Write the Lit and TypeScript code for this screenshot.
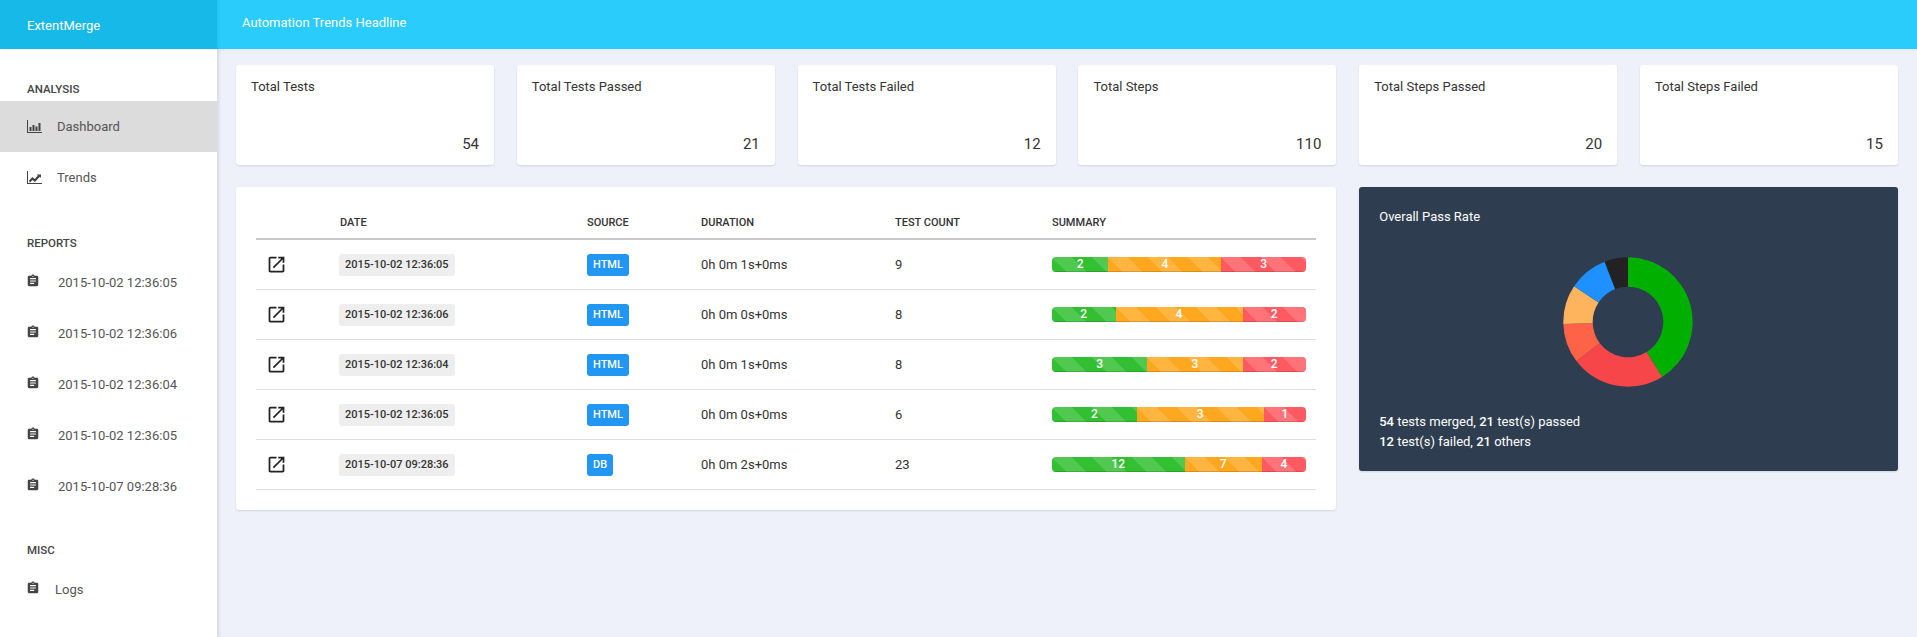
import { html, svg, css, LitElement } from 'lit';
import { customElement } from 'lit/decorators.js';

const ASSIGNMENT = 'M19 3h-4.18C14.4 1.84 13.3 1 12 1c-1.3 0-2.4.84-2.82 2H5c-1.1 0-2 .9-2 2v14c0 1.1.9 2 2 2h14c1.1 0 2-.9 2-2V5c0-1.1-.9-2-2-2zm-7 0c.55 0 1 .45 1 1s-.45 1-1 1-1-.45-1-1 .45-1 1-1zm2 14H7v-2h7v2zm3-4H7v-2h10v2zm0-4H7V7h10v2z';
const OPEN_NEW = 'M19 19H5V5h7V3H5c-1.11 0-2 .9-2 2v14c0 1.1.89 2 2 2h14c1.1 0 2-.9 2-2v-7h-2v7zM14 3v2h3.59l-9.83 9.83 1.41 1.41L19 6.41V10h2V3h-7z';

const stats = [
  ['Total Tests', 54],
  ['Total Tests Passed', 21],
  ['Total Tests Failed', 12],
  ['Total Steps', 110],
  ['Total Steps Passed', 20],
  ['Total Steps Failed', 15],
];

const reports = ['2015-10-02 12:36:05', '2015-10-02 12:36:06', '2015-10-02 12:36:04', '2015-10-02 12:36:05', '2015-10-07 09:28:36'];

const rows = [
  { date: '2015-10-02 12:36:05', source: 'HTML', duration: '0h 0m 1s+0ms', count: 9, parts: [2, 4, 3] },
  { date: '2015-10-02 12:36:06', source: 'HTML', duration: '0h 0m 0s+0ms', count: 8, parts: [2, 4, 2] },
  { date: '2015-10-02 12:36:04', source: 'HTML', duration: '0h 0m 1s+0ms', count: 8, parts: [3, 3, 2] },
  { date: '2015-10-02 12:36:05', source: 'HTML', duration: '0h 0m 0s+0ms', count: 6, parts: [2, 3, 1] },
  { date: '2015-10-07 09:28:36', source: 'DB', duration: '0h 0m 2s+0ms', count: 23, parts: [12, 7, 4] },
];

const slices: [number, string][] = [
  [21, '#00af00'],
  [12, '#f7464a'],
  [5, '#ff6347'],
  [5, '#fdb45c'],
  [5, '#1e90ff'],
  [3, '#222222'],
];

@customElement('app-root')
export class AppRoot extends LitElement {
  static styles = css`
    :host {
      display: block;
      min-height: 100vh;
      font-family: Roboto, 'Noto Sans', sans-serif;
      font-size: 13px;
      color: #333;
      background: #eef1f9;
    }
    .layout {
      display: grid;
      grid-template-columns: 217px 1fr;
      grid-template-rows: 49px 1fr;
      min-height: 100vh;
    }
    .brand {
      background: #17b9e8;
      color: #fff;
      font-size: 13px;
      line-height: 47px;
      padding: 2px 0 0 27px;
      box-shadow: 1px 0 3px rgba(0, 0, 0, 0.08);
      z-index: 2;
    }
    .topbar {
      background: #29ccfb;
      color: #fff;
      font-size: 13px;
      line-height: 45px;
      padding-left: 25px;
      box-shadow: 0 1px 2px rgba(0, 0, 0, 0.06);
      z-index: 1;
    }
    .sidebar {
      background: #fff;
      padding-top: 28px;
      box-shadow: 2px 0 3px rgba(0, 0, 0, 0.1);
      z-index: 1;
      color: #555;
    }
    .label {
      height: 24px;
      line-height: 24px;
      padding-left: 27px;
      font-size: 11.5px;
      font-weight: 500;
      color: #444;
    }
    .nav-item {
      display: flex;
      align-items: center;
      height: 51px;
      padding-left: 27px;
    }
    .nav-item.active {
      background: #dcdcdc;
    }
    .nav-item svg {
      flex: none;
      display: block;
    }
    .main-nav svg {
      width: 15px;
      height: 13px;
      margin-right: 15px;
    }
    .report-nav {
      margin-top: 2px;
      margin-bottom: 26px;
    }
    .report-nav .nav-item,
    .misc-nav .nav-item {
      padding-left: 26px;
    }
    .report-nav svg,
    .misc-nav svg {
      width: 14px;
      height: 14px;
      fill: #444;
      margin-top: -3px;
      margin-right: 18px;
    }
    .misc-nav {
      margin-top: 2px;
    }
    .misc-nav svg {
      margin-right: 15px;
    }
    .main-nav {
      margin-bottom: 28px;
    }
    .content {
      display: grid;
      grid-template-columns: repeat(6, 1fr);
      column-gap: 22.8px;
      row-gap: 22px;
      align-items: start;
      align-content: start;
      padding: 16px 19px;
    }
    .card {
      background: #fff;
      border-radius: 3px;
      box-shadow: 0 1px 2px rgba(0, 0, 0, 0.12);
    }
    .stat {
      display: flex;
      flex-direction: column;
      height: 100px;
      box-sizing: border-box;
      padding: 12px 15px 11px;
      line-height: 20px;
    }
    .stat .value {
      margin-top: auto;
      text-align: right;
      font-size: 15px;
    }
    .tests {
      grid-column: span 4;
      padding: 20px;
    }
    table {
      width: 100%;
      border-collapse: collapse;
      table-layout: fixed;
    }
    th {
      height: 31px;
      padding: 0;
      text-align: left;
      font-size: 11px;
      font-weight: 500;
      color: #333;
      border-bottom: 2px solid #c8c8c8;
    }
    th:nth-child(2) {
      padding-left: 1px;
    }
    td {
      height: 49px;
      padding: 0;
      border-bottom: 1px solid #ddd;
    }
    .open {
      display: block;
      width: 21px;
      height: 21px;
      margin-left: 9.5px;
      fill: #222;
    }
    .date {
      display: inline-block;
      height: 22px;
      line-height: 22px;
      padding: 0 6px;
      border-radius: 3px;
      background: #eee;
      font-size: 11px;
      font-weight: 500;
      color: #333;
    }
    .source {
      display: inline-block;
      height: 22px;
      line-height: 22px;
      padding: 0 6px;
      border-radius: 3px;
      background: #2196f3;
      color: #fff;
      font-size: 11px;
      font-weight: 500;
    }
    .bar {
      display: flex;
      width: 254px;
      height: 15px;
      border-radius: 4px;
      overflow: hidden;
    }
    .seg {
      text-align: center;
      color: #fff;
      font-size: 12px;
      font-weight: 500;
      line-height: 15px;
      box-shadow: inset 0 -1px 0 rgba(0, 0, 0, 0.15);
      background-size: 40px 40px;
      background-image: linear-gradient(
        45deg,
        rgba(255, 255, 255, 0.15) 25%,
        transparent 25%,
        transparent 50%,
        rgba(255, 255, 255, 0.15) 50%,
        rgba(255, 255, 255, 0.15) 75%,
        transparent 75%,
        transparent
      );
    }
    .seg.pass {
      background-color: #32bf32;
    }
    .seg.warn {
      background-color: #ffa81f;
    }
    .seg.fail {
      background-color: #ff5a61;
    }
    .rate {
      grid-column: span 2;
      background: #2e3e50;
      color: #fff;
      padding: 20px 20px 19px;
      line-height: 20px;
    }
    .donut {
      display: block;
      width: 130px;
      height: 130px;
      margin: 30px 0 25px 184px;
    }
    .rate b {
      font-weight: 500;
    }
  `;

  // ring slices, clockwise from 12 o'clock
  donut() {
    const total = slices.reduce((sum, s) => sum + s[0], 0);
    const R = 64.7;
    const r = 35.3;
    let start = 0;
    return slices.map(([n, color]) => {
      const end = start + (n / total) * Math.PI * 2;
      const pt = (rad: number, a: number) => `${65 + rad * Math.sin(a)} ${65 - rad * Math.cos(a)}`;
      const big = end - start > Math.PI ? 1 : 0;
      const d = `M${pt(R, start)}A${R} ${R} 0 ${big} 1 ${pt(R, end)}L${pt(r, end)}A${r} ${r} 0 ${big} 0 ${pt(r, start)}Z`;
      start = end;
      return svg`<path d=${d} fill=${color}></path>`;
    });
  }

  clip() {
    return html`<svg viewBox="0 0 24 24"><path d=${ASSIGNMENT}></path></svg>`;
  }

  render() {
    return html`
      <div class="layout">
        <div class="brand">ExtentMerge</div>
        <div class="topbar">Automation Trends Headline</div>
        <nav class="sidebar">
          <div class="label">ANALYSIS</div>
          <div class="main-nav">
            <div class="nav-item active">
              <svg viewBox="0 0 15 13" fill="#444">
                <path d="M0 0h1v12h14v1H0z"></path>
                <path d="M2.5 7h2v4h-2zM5.5 5h2v6h-2zM8.5 6.5h2V11h-2zM11.5 3h2v8h-2z"></path>
              </svg>
              Dashboard
            </div>
            <div class="nav-item">
              <svg viewBox="0 0 15 13" fill="#444">
                <path d="M0 0h1v12h14v1H0z"></path>
                <path d="M2 9.6l3.4-3.6 2.4 2 3-3.4-1.2-1.1H14v3.4l-1.1-1.1-5 5.3-2.4-2-2.6 2.6z"></path>
              </svg>
              Trends
            </div>
          </div>
          <div class="label">REPORTS</div>
          <div class="report-nav">
            ${reports.map((r) => html`<div class="nav-item">${this.clip()}${r}</div>`)}
          </div>
          <div class="label">MISC</div>
          <div class="misc-nav">
            <div class="nav-item">${this.clip()}Logs</div>
          </div>
        </nav>
        <main class="content">
          ${stats.map(
            ([name, value]) => html`
              <div class="card stat">
                <div>${name}</div>
                <div class="value">${value}</div>
              </div>
            `
          )}
          <div class="card tests">
            <table>
              <colgroup>
                <col style="width:83px" />
                <col style="width:248px" />
                <col style="width:114px" />
                <col style="width:194px" />
                <col style="width:157px" />
                <col />
              </colgroup>
              <thead>
                <tr>
                  <th></th>
                  <th>DATE</th>
                  <th>SOURCE</th>
                  <th>DURATION</th>
                  <th>TEST COUNT</th>
                  <th>SUMMARY</th>
                </tr>
              </thead>
              <tbody>
                ${rows.map(
                  (row) => html`
                    <tr>
                      <td><svg class="open" viewBox="0 0 24 24"><path d=${OPEN_NEW}></path></svg></td>
                      <td><span class="date">${row.date}</span></td>
                      <td><span class="source">${row.source}</span></td>
                      <td>${row.duration}</td>
                      <td>${row.count}</td>
                      <td>
                        <div class="bar">
                          ${row.parts.map(
                            (p, i) => html`<div class="seg ${['pass', 'warn', 'fail'][i]}" style="flex:${p}">${p}</div>`
                          )}
                        </div>
                      </td>
                    </tr>
                  `
                )}
              </tbody>
            </table>
          </div>
          <div class="card rate">
            <div>Overall Pass Rate</div>
            <svg class="donut" viewBox="0 0 130 130">${this.donut()}</svg>
            <div><b>54</b> tests merged, <b>21</b> test(s) passed</div>
            <div><b>12</b> test(s) failed, <b>21</b> others</div>
          </div>
        </main>
      </div>
    `;
  }
}
